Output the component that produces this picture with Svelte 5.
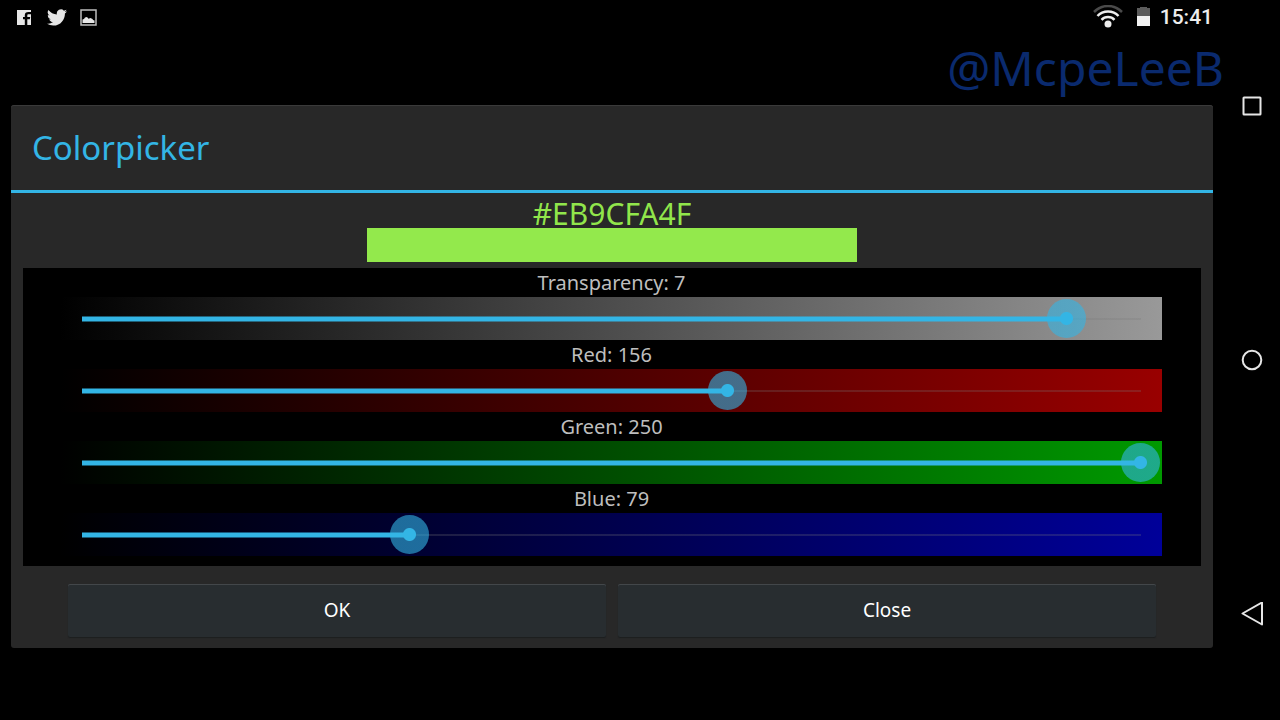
<script lang="ts">
	type Channel = { name: string; value: number; position: number };

	let alpha = $state(235);
	let channels = $state<Channel[]>([
		{ name: 'Transparency', value: 7, position: 93 },
		{ name: 'Red', value: 156, position: 61 },
		{ name: 'Green', value: 250, position: 100 },
		{ name: 'Blue', value: 79, position: 31 }
	]);

	let hex = $derived(
		[alpha, channels[1].value, channels[2].value, channels[3].value]
			.map((n) => n.toString(16).padStart(2, '0').toUpperCase())
			.join('')
	);
	// Android writes colours as ARGB, CSS wants RGBA
	let cssColor = $derived(`#${hex.slice(2)}${hex.slice(0, 2)}`);

	function handleInput(channel: Channel) {
		if (channel.name === 'Transparency') {
			channel.value = 100 - channel.position;
			alpha = Math.round(channel.position * 2.55);
		} else {
			channel.value = Math.round(channel.position * 2.55);
		}
	}
</script>

<div class="screen">
	<div class="main">
		<header class="status-bar">
			<div class="notifications">
				<svg width="17" height="15" viewBox="0 0 17 15" aria-hidden="true">
					<path fill="#e6e6e6" d="M0 0h14v2h-2.500C9 2 7.800 3.200 7.800 5.200V7H6v2.300h1.800V15H0zM10.300 15V9.300h2.500L13.200 7h-2.900V5.500c0-.8.4-1.200 1.200-1.200H14V15z" />
				</svg>
				<svg width="20" height="17" viewBox="0 2 24 20" aria-hidden="true">
					<path
						fill="#e6e6e6"
						d="M24 4.600a10 10 0 0 1-2.800.8 5 5 0 0 0 2.200-2.700 10 10 0 0 1-3.100 1.200 4.900 4.900 0 0 0-8.400 4.500A14 14 0 0 1 1.700 3.100a4.900 4.900 0 0 0 1.500 6.600 5 5 0 0 1-2.200-.6v.1a4.900 4.900 0 0 0 3.900 4.800 5 5 0 0 1-2.200.1 4.900 4.900 0 0 0 4.600 3.400A10 10 0 0 1 0 19.500 14 14 0 0 0 7.500 21.700c9.100 0 14-7.500 14-14v-.6A10 10 0 0 0 24 4.600z"
					/>
				</svg>
				<svg width="17" height="17" viewBox="0 0 17 17" aria-hidden="true">
					<rect x="1" y="1" width="15" height="15" fill="none" stroke="#bdbdbd" stroke-width="1.500" />
					<path fill="#e6e6e6" d="M2.500 14v-3.500l1.500-.5 1-1.500 2-.5L8.500 9.800 10.500 9l2 1 .5 1 1.500.5V14z" />
				</svg>
			</div>
			<div class="system">
				<svg class="wifi" width="30" height="24" viewBox="0 0 30 24" fill="none" aria-hidden="true">
					<path d="M1 7C9-1 21-1 29 7" stroke="#4a4a4a" stroke-width="2.500" />
					<path d="M4.500 11c5.500-6 15.500-6 21 0" stroke="#ededed" stroke-width="2.500" />
					<path d="M8.500 14.800c3.500-3.700 9.500-3.700 13 0" stroke="#ededed" stroke-width="2.500" />
					<circle cx="15" cy="19" r="3.500" fill="#ededed" />
				</svg>
				<svg class="battery" width="13" height="19" viewBox="0 0 13 19" aria-hidden="true">
					<path fill="#5c5c5c" d="M0 1h3V0h7v1h3v8H0z" />
					<path fill="#f2f2f2" d="M0 9h13v10H0z" />
				</svg>
				<time>15:41</time>
			</div>
		</header>

		<span class="watermark">@McpeLeeB</span>

		<div class="stage">
			<div class="dialog" role="dialog" aria-labelledby="dialog-title">
				<h1 id="dialog-title">Colorpicker</h1>
				<div class="hex" style="color: {cssColor}">#{hex}</div>
				<div class="swatch" style="background-color: {cssColor}"></div>

				<div class="panel">
					{#each channels as channel}
						{@const id = channel.name.toLowerCase()}
						<label for={id}>{channel.name}: {channel.value}</label>
						<div class="slider {id}">
							<input
								{id}
								type="range"
								min="0"
								max="100"
								bind:value={channel.position}
								oninput={() => handleInput(channel)}
								style="--position: {channel.position / 100}"
							/>
						</div>
					{/each}
				</div>

				<div class="buttons">
					<button type="button">OK</button>
					<button type="button">Close</button>
				</div>
			</div>
		</div>
	</div>

	<nav class="nav-bar">
		<button type="button" aria-label="Recent apps">
			<svg width="24" height="24" viewBox="0 0 24 24">
				<rect x="3.500" y="3.500" width="17" height="17" rx="0.500" />
			</svg>
		</button>
		<button type="button" aria-label="Home">
			<svg width="24" height="24" viewBox="0 0 24 24">
				<circle cx="12" cy="12" r="9.300" />
			</svg>
		</button>
		<button type="button" aria-label="Back">
			<svg width="24" height="24" viewBox="0 0 24 24">
				<path d="M22 .500v22L2.500 11.500z" stroke-linejoin="round" />
			</svg>
		</button>
	</nav>
</div>

<style>
	:global(body) {
		background-color: #000000;
	}

	.screen {
		display: flex;
		min-height: 100vh;
		font-family: 'Noto Sans', 'Open Sans', sans-serif;
	}

	.main {
		position: relative;
		flex: 1;
		min-width: 0;
		display: flex;
		flex-direction: column;
	}

	.status-bar {
		display: flex;
		align-items: center;
		justify-content: space-between;
		height: 34px;
		padding: 0 11px 0 17px;
	}

	.notifications {
		display: flex;
		align-items: center;
		gap: 13px;
	}

	.system {
		display: flex;
		align-items: center;
		gap: 10px;
	}

	.wifi {
		margin-right: 4px;
	}

	.battery {
		margin-bottom: 2px;
	}

	time {
		font-family: Roboto, sans-serif;
		font-size: 21px;
		font-weight: 500;
		line-height: 36px;
		color: #ededed;
	}

	.watermark {
		position: absolute;
		top: 34px;
		right: 0;
		font-size: 48px;
		line-height: 68px;
		color: #0a2a6e;
	}

	.stage {
		flex: 1;
		display: flex;
		align-items: center;
		padding: 0 11px 2px;
	}

	.dialog {
		flex: 1;
		min-width: 0;
		border-radius: 3px;
		background-color: #282828;
		box-shadow: inset 0 1px 0 #3a3a3a;
	}

	h1 {
		margin: 0;
		padding: 0 21px;
		border-bottom: 3px solid #33b5e5;
		font-size: 33px;
		font-weight: 400;
		line-height: 85px;
		color: #33b5e5;
	}

	.hex {
		padding-top: 7px;
		font-size: 30px;
		line-height: 28px;
		text-align: center;
	}

	.swatch {
		width: 490px;
		max-width: 100%;
		height: 34px;
		margin: 0 auto 6px;
	}

	.panel {
		margin: 0 12px;
		padding: 0 39px 10px 38px;
		background-color: #000000;
	}

	label {
		display: block;
		font-size: 20px;
		line-height: 29px;
		text-align: center;
		color: #bebebe;
	}

	.slider {
		display: flex;
		align-items: center;
		height: 43px;
		padding: 0 2px 0 1px;
	}

	.transparency {
		background: linear-gradient(92deg, #000000, #999999);
	}

	.red {
		background: linear-gradient(92deg, #000000, #990000);
	}

	.green {
		background: linear-gradient(92deg, #000000, #009900);
	}

	.blue {
		background: linear-gradient(92deg, #000000, #000099);
	}

	input {
		appearance: none;
		flex: 1;
		min-width: 0;
		height: 39px;
		margin: 0;
		background: none;
		cursor: pointer;
	}

	/* progress line over a thin full-length line, both inset by the thumb radius */
	input::-webkit-slider-runnable-track {
		height: 39px;
		background:
			linear-gradient(transparent, #33b5e5 1px, #33b5e5 5px, transparent) 20px 17px /
				calc((100% - 39px) * var(--position)) 6px no-repeat,
			linear-gradient(rgba(120, 120, 120, 0.25), rgba(120, 120, 120, 0.25)) 20px 19px /
				calc(100% - 39px) 2px no-repeat;
	}

	input::-webkit-slider-thumb {
		appearance: none;
		width: 39px;
		height: 39px;
		border-radius: 50%;
		background: radial-gradient(circle, #33b5e5 6px, rgba(51, 181, 229, 0.6) 7px);
	}

	.buttons {
		display: flex;
		gap: 12px;
		padding: 18px 57px 11px;
	}

	.buttons button {
		flex: 1;
		height: 53px;
		border: none;
		border-radius: 2px;
		background-color: #282d30;
		box-shadow:
			inset 0 1px 0 #43474a,
			0 1px 1px #1c1e1f;
		font-family: inherit;
		font-size: 19px;
		color: #ffffff;
		cursor: pointer;
	}

	.nav-bar {
		display: flex;
		flex-direction: column;
		justify-content: space-between;
		align-items: center;
		width: 56px;
		padding: 94px 0;
		box-sizing: border-box;
	}

	.nav-bar button {
		display: flex;
		padding: 0;
		border: none;
		background: none;
		cursor: pointer;
	}

	.nav-bar svg {
		fill: none;
		stroke: #e6e6e6;
		stroke-width: 2;
	}
</style>
